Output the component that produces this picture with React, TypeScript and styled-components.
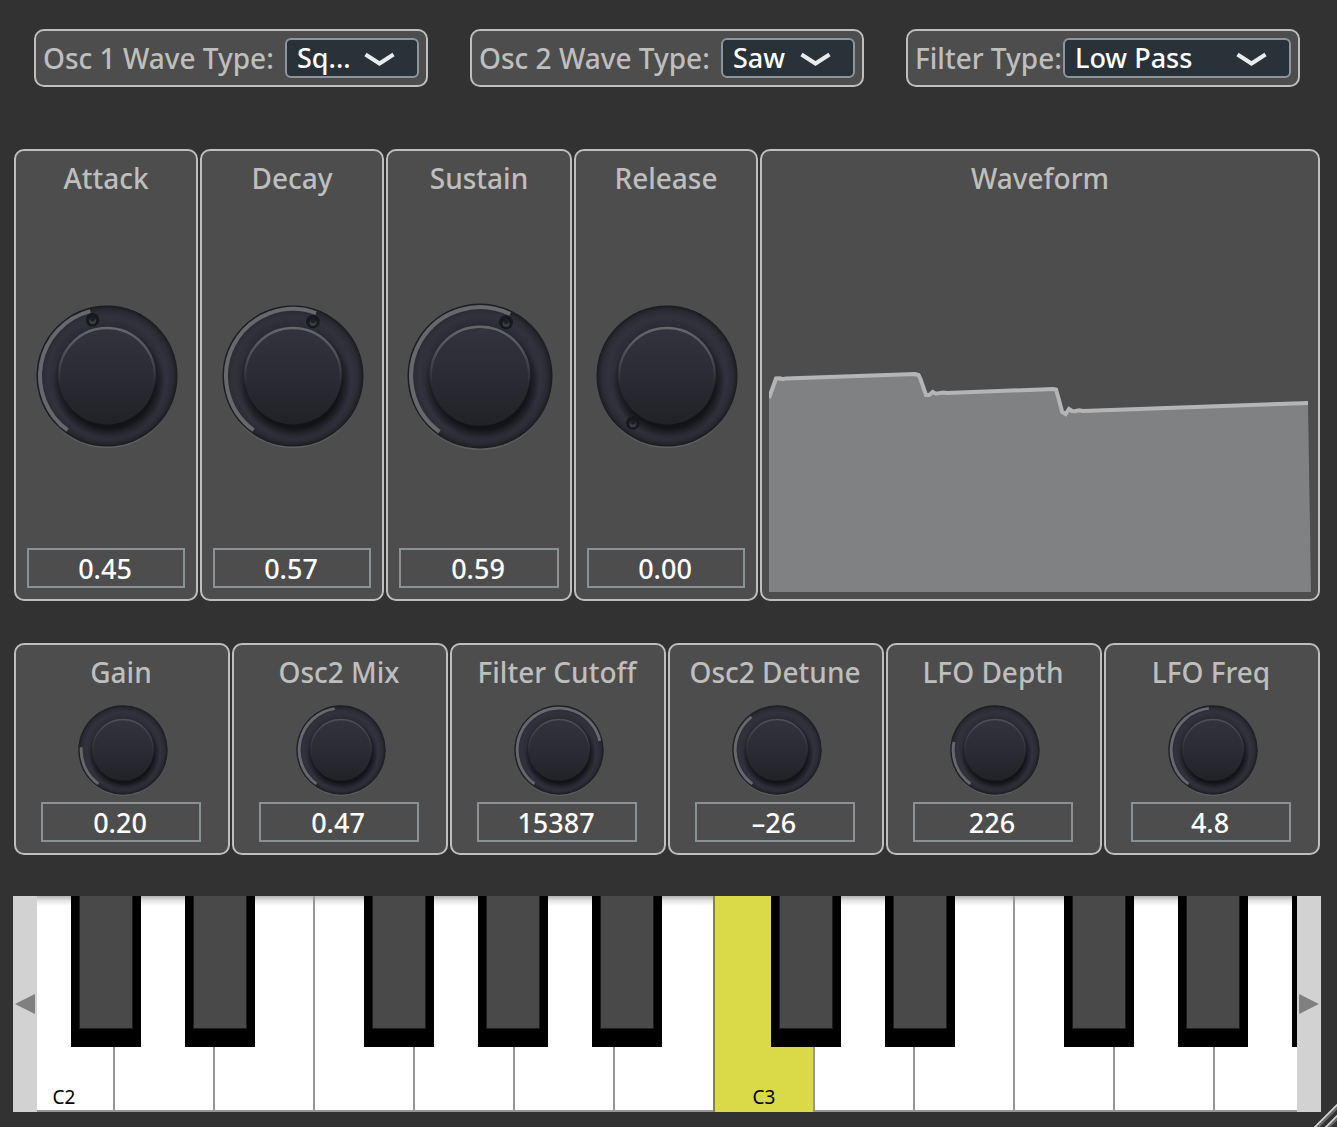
import React, { useId, useState } from "react";
import styled, { createGlobalStyle } from "styled-components";

const sans = `"Noto Sans", "Open Sans", sans-serif`;

const GlobalStyle = createGlobalStyle`
  *, *::before, *::after { box-sizing: border-box; }
  body {
    margin: 0;
    background: #323232;
    font-family: ${sans};
    color: #bebebe;
  }
  button, input, select { font: inherit; }
`;

const Synth = styled.main`
  position: relative;
  display: flex;
  flex-direction: column;
  min-height: 100vh;
  padding: 29px 17px 15px 14px;
  overflow: hidden;
`;

const Selectors = styled.section`
  display: grid;
  grid-template-columns: repeat(3, minmax(0, 1fr));
  gap: 42px;
  padding: 0 20px;
  margin-bottom: 62px;
`;

const Panel = styled.div`
  display: flex;
  background: #4d4d4d;
  border: 2px solid #bebebe;
  border-radius: 10px;
`;

const SelectorPanel = styled(Panel)`
  align-items: center;
  justify-content: space-between;
  padding: 7px;
`;

const SelectorLabel = styled.label`
  flex: none;
  font-size: 28px;
  line-height: 38px;
  font-weight: 500;
  white-space: nowrap;
`;

const SelectFrame = styled.div<{ $wide?: boolean }>`
  position: relative;
  flex: none;
  width: ${(p) => (p.$wide ? 228 : 134)}px;
`;

const Select = styled.select`
  display: block;
  width: 100%;
  height: 40px;
  padding: 0 0 0 10px;
  appearance: none;
  background: #283238;
  color: #fff;
  border: 2px solid #8b959b;
  border-radius: 6px;
  font-size: 27px;
  line-height: 36px;
  font-weight: 500;
`;

const Chevron = styled.svg`
  position: absolute;
  top: 13px;
  right: 24px;
  pointer-events: none;
`;

const Envelope = styled.section`
  display: grid;
  grid-template-columns: 184fr 184fr 186fr 184fr 560fr;
  gap: 2px;
  margin-bottom: 42px;
`;

const Controls = styled.section`
  display: grid;
  grid-template-columns: repeat(6, minmax(0, 1fr));
  gap: 2px;
  margin-bottom: 41px;
`;

const Card = styled(Panel)<{ $compact?: boolean }>`
  flex-direction: column;
  min-width: 0;
  padding: ${(p) => (p.$compact ? "7px 27px 11px 25px" : "7px 11px 11px")};
`;

const ScopeCard = styled(Panel)`
  flex-direction: column;
  min-width: 0;
  padding: 7px;
`;

const Title = styled.h2`
  margin: 0;
  padding-bottom: 5px;
  font-size: 28px;
  line-height: 40px;
  font-weight: 500;
  text-align: center;
  white-space: nowrap;
`;

const TitleRow = styled.div`
  display: flex;
  justify-content: center;
`;

const DialSlot = styled.div<{ $compact?: boolean }>`
  display: grid;
  place-items: center;
  height: ${(p) => (p.$compact ? 105 : 345)}px;
  padding-left: ${(p) => (p.$compact ? 4 : 2)}px;
`;

const DialFrame = styled.div<{ $size: number }>`
  position: relative;
  width: ${(p) => p.$size}px;
  height: ${(p) => p.$size}px;
`;

const DialDrawing = styled.svg`
  display: block;
  width: 100%;
  height: 100%;
  overflow: visible;
`;

const DialInput = styled.input`
  position: absolute;
  inset: 0;
  width: 100%;
  height: 100%;
  margin: 0;
  opacity: 0;
  cursor: pointer;
`;

const ValueBox = styled.input`
  display: block;
  width: 100%;
  height: 40px;
  padding: 0 2px 0 0;
  background: transparent;
  color: #fff;
  border: 2px solid #8b9192;
  border-radius: 0;
  font-size: 27px;
  line-height: 36px;
  font-weight: 500;
  text-align: center;
`;

const Scope = styled.svg`
  display: block;
  flex: 1 1 0;
  width: 100%;
  min-height: 0;
`;

const Keyboard = styled.section`
  display: flex;
  height: 216px;
  margin: 0 -1px;
`;

const ScrollButton = styled.button`
  flex: none;
  display: grid;
  place-items: center;
  width: 24px;
  padding: 0;
  border: 0;
  background: #d2d2d2;
`;

const KeyBed = styled.div`
  flex: 1;
  min-width: 0;
  overflow: hidden;
  background: #fff;
`;

const KeyStrip = styled.div`
  display: flex;
  height: 100%;
  margin-left: -24px;
`;

const Note = styled.div`
  position: relative;
  flex: none;
  width: 100px;
`;

const WhiteKey = styled.button<{ $held: boolean }>`
  display: flex;
  align-items: flex-end;
  justify-content: center;
  width: 100%;
  height: 100%;
  padding: 0 0 ${(p) => (p.$held ? 2 : 0)}px;
  border: 0;
  border-left: 2px solid ${(p) => (p.$held ? "#84863a" : "#979797")};
  border-bottom: ${(p) => (p.$held ? "0" : "2px solid #979797")};
  background: ${(p) =>
    p.$held
      ? "#dada48"
      : "linear-gradient(#b4b4b4, #e6e6e6 5px, #fff 10px)"};
  color: #000;
  font-size: 19px;
  line-height: 26px;
`;

const BlackKey = styled.button<{ $left: number }>`
  position: absolute;
  z-index: 1;
  top: 0;
  left: ${(p) => p.$left}px;
  width: 70px;
  height: 151px;
  padding: 0;
  border: solid #000;
  border-width: 0 8px 18px;
  background: #494949;
  box-shadow: inset 1px 0 #1c1c1c, inset -1px -1px #1c1c1c;
`;

const ResizeCorner = styled.svg`
  position: absolute;
  right: 0;
  bottom: 0;
`;

const START = 216;
const SWEEP = 288;

function polar(angle: number, radius: number) {
  const a = (angle * Math.PI) / 180;
  return { x: 71 + radius * Math.sin(a), y: 71 - radius * Math.cos(a) };
}

function DialFace({ amount, compact }: { amount: number; compact: boolean }) {
  const id = useId().replace(/[^a-zA-Z0-9]/g, "");
  const radius = compact ? 66 : 67;
  const end = START + SWEEP * amount;
  const from = polar(START, radius);
  const to = polar(end, radius);
  const marker = polar(end, 58);
  const large = SWEEP * amount > 180 ? 1 : 0;
  return (
    <DialDrawing viewBox="0 0 142 142" aria-hidden="true">
      <defs>
        <radialGradient id={`${id}ring`}>
          <stop offset="0.66" stopColor="#26262e" />
          <stop offset="0.74" stopColor="#2d2d37" />
          <stop offset="0.84" stopColor="#32323e" />
          <stop offset="0.93" stopColor="#2b2b34" />
          <stop offset="0.98" stopColor="#202026" />
          <stop offset="1" stopColor="#18181b" />
        </radialGradient>
        <linearGradient id={`${id}cap`} x1="0" y1="0" x2="0" y2="1">
          <stop offset="0" stopColor="#33333d" />
          <stop offset="0.5" stopColor="#2b2b34" />
          <stop offset="1" stopColor="#212226" />
        </linearGradient>
        <linearGradient id={`${id}rim`} x1="0" y1="0" x2="0" y2="1">
          <stop offset="0" stopColor="#66666c" stopOpacity={compact ? 0.6 : 1} />
          <stop offset="0.25" stopColor="#505056" stopOpacity={compact ? 0.6 : 1} />
          <stop offset="0.6" stopColor="#505056" stopOpacity="0" />
        </linearGradient>
        <linearGradient id={`${id}glow`} x1="0" y1="0" x2="0" y2="1">
          <stop offset="0.75" stopColor="#606060" stopOpacity="0" />
          <stop offset="1" stopColor="#606060" />
        </linearGradient>
        <radialGradient id={`${id}shade`}>
          <stop offset="0.8" stopColor="#121215" stopOpacity="0.95" />
          <stop offset="1" stopColor="#121215" stopOpacity="0" />
        </radialGradient>
      </defs>
      <circle cx="71" cy="72" r="71" fill={`url(#${id}glow)`} />
      <circle cx="71" cy="71" r="70.5" fill={`url(#${id}ring)`} />
      <circle cx="73" cy="78" r="56" fill={`url(#${id}shade)`} />
      <circle cx="71" cy="71" r="48.5" fill={`url(#${id}cap)`} />
      <circle cx="71" cy="71" r="48" fill="none" stroke={`url(#${id}rim)`} strokeWidth="2.4" />
      {amount > 0 && (
        <path
          d={`M${from.x} ${from.y}A${radius} ${radius} 0 ${large} 1 ${to.x} ${to.y}`}
          fill="none"
          stroke="#66686d"
          strokeWidth={compact ? 4.6 : 4}
        />
      )}
      {!compact && (
        <g>
          <circle cx={marker.x} cy={marker.y} r="6.8" fill="#17191d" />
          <circle cx={marker.x} cy={marker.y + 1} r="3.4" fill="#3c4044" />
          <circle cx={marker.x} cy={marker.y - 1} r="2.6" fill="#1c1f23" />
        </g>
      )}
    </DialDrawing>
  );
}

type DialSpec = {
  name: string;
  value: number;
  min: number;
  max: number;
  digits: number;
  size?: number;
};

function Dial({ spec, compact = false }: { spec: DialSpec; compact?: boolean }) {
  const [value, setValue] = useState(spec.value);
  const id = useId();
  const text = value.toFixed(spec.digits).replace("-", "–");
  const amount = (value - spec.min) / (spec.max - spec.min);
  return (
    <Card $compact={compact}>
      <TitleRow>
        <Title as="label" htmlFor={id}>
          {spec.name}
        </Title>
      </TitleRow>
      <DialSlot $compact={compact}>
        <DialFrame $size={spec.size ?? (compact ? 90 : 142)}>
          <DialFace amount={amount} compact={compact} />
          <DialInput
            id={id}
            type="range"
            min={spec.min}
            max={spec.max}
            step={10 ** -spec.digits}
            value={value}
            onChange={(e) => setValue(Number(e.target.value))}
          />
        </DialFrame>
      </DialSlot>
      <ValueBox type="text" readOnly value={text} aria-label={`${spec.name} value`} />
    </Card>
  );
}

function Selector({
  label,
  initial,
  options,
  wide,
}: {
  label: string;
  initial: string;
  options: string[];
  wide?: boolean;
}) {
  const id = useId();
  return (
    <SelectorPanel>
      <SelectorLabel htmlFor={id}>{label}</SelectorLabel>
      <SelectFrame $wide={wide}>
        <Select id={id} defaultValue={initial}>
          {options.map((o) => (
            <option key={o}>{o}</option>
          ))}
        </Select>
        <Chevron width="31" height="18" viewBox="0 0 31 18" aria-hidden="true">
          <path d="M1.5 3.5L15.5 12.5L29.5 3.5" fill="none" stroke="#e9ebec" strokeWidth="4" />
        </Chevron>
      </SelectFrame>
    </SelectorPanel>
  );
}

const envelope: DialSpec[] = [
  { name: "Attack", value: 0.45, min: 0, max: 1, digits: 2 },
  { name: "Decay", value: 0.57, min: 0, max: 1, digits: 2 },
  { name: "Sustain", value: 0.59, min: 0, max: 1, digits: 2, size: 146 },
  { name: "Release", value: 0, min: 0, max: 1, digits: 2 },
];

const controls: DialSpec[] = [
  { name: "Gain", value: 0.2, min: 0, max: 1, digits: 2 },
  { name: "Osc2 Mix", value: 0.47, min: 0, max: 1, digits: 2 },
  { name: "Filter Cutoff", value: 15387, min: 20, max: 20000, digits: 0 },
  { name: "Osc2 Detune", value: -26, min: -100, max: 100, digits: 0 },
  { name: "LFO Depth", value: 226, min: 0, max: 1000, digits: 0 },
  { name: "LFO Freq", value: 4.8, min: 0, max: 10, digits: 1 },
];

const trace =
  "0,195 7,175.5 11,175.3 14,176.2 17,175.4 146,171 149.5,172 151.5,176 157,192 160.3,192 163.7,189 167,190.7 174,189.5 178,190 284,186 287,186.5 290,197 293.2,209 296.6,211 300,206 303,208 306,208.3 310,207.2 314,208 539,200";

const octave = [
  { name: "C", sharp: 58 },
  { name: "D", sharp: 72 },
  { name: "E" },
  { name: "F", sharp: 51 },
  { name: "G", sharp: 65 },
  { name: "A", sharp: 79 },
  { name: "B" },
];

const notes = [2, 3].flatMap((n) => octave.map((k) => ({ ...k, id: `${k.name}${n}` })));

function Keys() {
  const [held, setHeld] = useState("C3");
  return (
    <KeyBed>
      <KeyStrip>
        {notes.map((note) => (
          <Note key={note.id}>
            <WhiteKey
              type="button"
              aria-label={note.id}
              $held={held === note.id}
              onClick={() => setHeld(note.id)}
            >
              {note.name === "C" ? note.id : null}
            </WhiteKey>
            {note.sharp !== undefined && (
              <BlackKey type="button" aria-label={`${note.id} sharp`} $left={note.sharp} />
            )}
          </Note>
        ))}
      </KeyStrip>
    </KeyBed>
  );
}

export default function App() {
  return (
    <>
      <GlobalStyle />
      <Synth>
        <Selectors>
          <Selector label="Osc 1 Wave Type:" initial="Sq..." options={["Sine", "Saw", "Sq..."]} />
          <Selector label="Osc 2 Wave Type:" initial="Saw" options={["Sine", "Saw", "Square"]} />
          <Selector
            label="Filter Type:"
            initial="Low Pass"
            options={["Low Pass", "Band Pass", "High Pass"]}
            wide
          />
        </Selectors>
        <Envelope>
          {envelope.map((spec) => (
            <Dial key={spec.name} spec={spec} />
          ))}
          <ScopeCard>
            <Title>Waveform</Title>
            <Scope viewBox="0 0 542 389" preserveAspectRatio="none" aria-hidden="true">
              <polygon points={`${trace} 542,389 0,389`} fill="#808182" />
              <polyline points={trace} fill="none" stroke="#b5b5b5" strokeWidth="4" />
            </Scope>
          </ScopeCard>
        </Envelope>
        <Controls>
          {controls.map((spec) => (
            <Dial key={spec.name} spec={spec} compact />
          ))}
        </Controls>
        <Keyboard aria-label="Keyboard">
          <ScrollButton type="button" aria-label="Scroll keys left">
            <svg width="20" height="20" viewBox="0 0 20 20" aria-hidden="true">
              <path d="M20 0V20L0 10Z" fill="#808080" />
            </svg>
          </ScrollButton>
          <Keys />
          <ScrollButton type="button" aria-label="Scroll keys right">
            <svg width="20" height="20" viewBox="0 0 20 20" aria-hidden="true">
              <path d="M0 0V20L20 10Z" fill="#808080" />
            </svg>
          </ScrollButton>
        </Keyboard>
        <ResizeCorner width="24" height="24" viewBox="0 0 24 24" aria-hidden="true">
          <path d="M3 26L26 3M14 26L26 14" stroke="#6a6a6a" strokeWidth="2" />
          <path d="M1 25L25 1M12 25L25 12" stroke="#d6d6d6" strokeWidth="1.8" />
        </ResizeCorner>
      </Synth>
    </>
  );
}
